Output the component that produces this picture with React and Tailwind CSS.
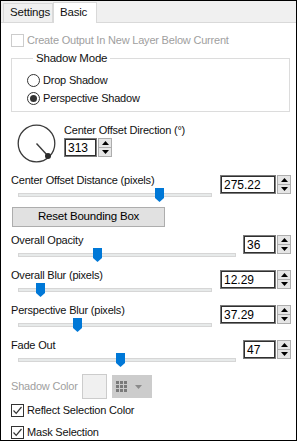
import React from 'react';

const font = { fontFamily: '"Liberation Sans", Arial, sans-serif' };

function Checkbox({ checked, disabled }) {
    return (
        <span
            className={`w-[13px] h-[13px] border bg-white flex items-center justify-center shrink-0 ${
                disabled ? 'border-[#cccccc]' : 'border-[#333333]'
            }`}
        >
            {checked && (
                <svg width="11" height="11" viewBox="0 0 11 11">
                    <path d="M1.5 5.5 L4.2 8.3 L9.5 2" fill="none" stroke="#333333" strokeWidth="1.2" />
                </svg>
            )}
        </span>
    );
}

function Radio({ checked }) {
    return (
        <span className="w-[13px] h-[13px] rounded-full border border-[#333333] bg-white flex items-center justify-center shrink-0">
            {checked && <span className="w-[7px] h-[7px] rounded-full bg-[#333333]" />}
        </span>
    );
}

function SpinBox({ value, wide }) {
    return (
        <div className="flex h-[19px]">
            <div
                className={`${wide ? 'w-[56px]' : 'w-[33px]'} h-full border border-[#7a7a7a] shadow-[inset_0_0_0_1px_#2f2f2f] bg-white pl-[3px] flex items-center text-[12px] tracking-normal text-black leading-none`}
            >
                {value}
            </div>
            <div className="w-[14px] h-full flex flex-col ml-[1px]">
                <div className="flex-1 border border-[#adadad] bg-[#e5e5e5] flex items-center justify-center">
                    <svg width="7" height="4" viewBox="0 0 7 4">
                        <path d="M0 4 L3.5 0 L7 4 Z" fill="#000" />
                    </svg>
                </div>
                <div className="flex-1 border border-t-0 border-[#adadad] bg-[#e5e5e5] flex items-center justify-center">
                    <svg width="7" height="4" viewBox="0 0 7 4">
                        <path d="M0 0 L7 0 L3.5 4 Z" fill="#000" />
                    </svg>
                </div>
            </div>
        </div>
    );
}

function Slider({ width, thumb }) {
    return (
        <div className={`relative h-[16px] ml-[7px] ${width}`}>
            <div className="absolute left-0 right-0 top-[6px] h-[4px] bg-[#e7eaea] border border-[#d6d6d6]" />
            <svg className={`absolute top-[1px] ${thumb}`} width="9" height="14" viewBox="0 0 9 14">
                <path d="M0 0 H9 V10 L4.5 14 L0 10 Z" fill="#0078d7" />
            </svg>
        </div>
    );
}

function SliderRow({ label, value, wide, width, thumb, className }) {
    return (
        <div className={`flex items-start ${className}`}>
            <div className="flex-1 flex flex-col">
                <div className="h-[14px] leading-[14px]">{label}</div>
                <Slider width={width} thumb={thumb} />
            </div>
            <div className="pt-[2px]">
                <SpinBox value={value} wide={wide} />
            </div>
        </div>
    );
}

export default function App() {
    return (
        <div
            className="w-[297px] h-[441px] border border-black bg-[#f0f0f0] overflow-hidden flex flex-col text-[11px] tracking-[-0.2px] text-[#111111]"
            style={font}
        >
            {/* Tabs */}
            <div className="h-[21px] flex items-end pl-[2px] shrink-0">
                <div className="h-[19px] w-[50px] border border-b-0 border-[#d9d9d9] bg-[#f0f0f0] flex items-center pl-[6px] text-[11.5px]">
                    Settings
                </div>
                <div className="h-[21px] w-[44px] border border-b-0 border-[#d9d9d9] bg-white flex items-center pl-[6px] text-[11.5px] -mb-[1px] relative">
                    Basic
                </div>
            </div>

            {/* Panel */}
            <div className="flex-1 bg-white border-t border-[#d9d9d9] pl-[10px] pr-[5px] flex flex-col">
                <div className="mt-[10px] h-[14px] flex items-center gap-[3px] text-[#a0a0a0]">
                    <Checkbox disabled />
                    <span>Create Output In New Layer Below Current</span>
                </div>

                <fieldset className="mt-[4px] border border-[#dcdcdc] pl-[15px] pb-[6px] mr-[1px]">
                    <legend className="ml-[6px] px-[3px] h-[14px] leading-[14px] text-[11.5px]">Shadow Mode</legend>
                    <div className="mt-[8px] h-[14px] flex items-center gap-[3px]">
                        <Radio />
                        <span>Drop Shadow</span>
                    </div>
                    <div className="mt-[4px] h-[14px] flex items-center gap-[3px]">
                        <Radio checked />
                        <span>Perspective Shadow</span>
                    </div>
                </fieldset>

                {/* Direction dial */}
                <div className="mt-[11px] flex items-start">
                    <svg className="ml-[6px] mt-[1px] shrink-0" width="39" height="39" viewBox="0 0 39 39">
                        <circle cx="19.5" cy="19.5" r="18.3" fill="none" stroke="#3a3a3a" strokeWidth="1.3" />
                        <line x1="19.5" y1="19.5" x2="31" y2="32" stroke="#3a3a3a" strokeWidth="1.4" />
                        <circle cx="31" cy="32" r="3" fill="#2b2b2b" />
                    </svg>
                    <div className="ml-[8px] flex flex-col">
                        <div className="h-[14px] leading-[14px]">Center Offset Direction (°)</div>
                        <div className="mt-[1px]">
                            <SpinBox value="313" />
                        </div>
                    </div>
                </div>

                <SliderRow
                    className="mt-[10px]"
                    label="Center Offset Distance (pixels)"
                    value="275.22"
                    wide
                    width="w-[194px]"
                    thumb="left-[137px]"
                />

                <button className="mt-[4px] ml-[1px] w-[153px] h-[20px] border border-[#adadad] bg-[#e1e1e1] text-[11.5px] text-black flex items-center justify-center">
                    Reset Bounding Box
                </button>

                <SliderRow
                    className="mt-[6px]"
                    label="Overall Opacity"
                    value="36"
                    width="w-[218px]"
                    thumb="left-[75px]"
                />
                <SliderRow
                    className="mt-[5px]"
                    label="Overall Blur (pixels)"
                    value="12.29"
                    wide
                    width="w-[194px]"
                    thumb="left-[18px]"
                />
                <SliderRow
                    className="mt-[5px]"
                    label="Perspective Blur (pixels)"
                    value="37.29"
                    wide
                    width="w-[194px]"
                    thumb="left-[55px]"
                />
                <SliderRow
                    className="mt-[5px]"
                    label="Fade Out"
                    value="47"
                    width="w-[218px]"
                    thumb="left-[98px]"
                />

                {/* Shadow colour */}
                <div className="mt-[6px] flex items-center h-[25px]">
                    <span className="w-[71px] text-[#a0a0a0]">Shadow Color</span>
                    <div className="w-[25px] h-[25px] border border-[#cccccc] bg-[#f0f0f0]" />
                    <div className="ml-[5px] w-[40px] h-[23px] bg-[#cccccc] flex items-center pl-[4px] gap-[4px]">
                        <div className="grid grid-cols-3 gap-[1px]">
                            {Array.from({ length: 9 }).map((_, i) => (
                                <span key={i} className="w-[3px] h-[3px] bg-[#7a7a7a]" />
                            ))}
                        </div>
                        <svg className="ml-[4px]" width="7" height="4" viewBox="0 0 7 4">
                            <path d="M0 0 L7 0 L3.5 4 Z" fill="#8a8a8a" />
                        </svg>
                    </div>
                </div>

                <div className="mt-[4px] h-[14px] flex items-center gap-[3px]">
                    <Checkbox checked />
                    <span>Reflect Selection Color</span>
                </div>
                <div className="mt-[8px] h-[14px] flex items-center gap-[3px]">
                    <Checkbox checked />
                    <span>Mask Selection</span>
                </div>
            </div>
        </div>
    );
}
